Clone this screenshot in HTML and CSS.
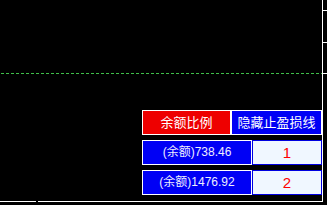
FILE: index.html
```html
<!DOCTYPE html>
<html lang="zh">
<head>
    <meta charset="UTF-8">
    <title>Chart</title>
    <link rel="stylesheet" href="styles.css">
</head>
<body>
    <div class="chart">
        <div class="plot">
            <div class="level-line"></div>

            <div class="panel">
                <div class="row">
                    <div class="btn btn-red btn-half">余额比例</div>
                    <div class="btn btn-blue btn-wide">隐藏止盈损线</div>
                </div>
                <div class="row">
                    <div class="btn btn-blue btn-label">(余额)738.46</div>
                    <div class="cell">1</div>
                </div>
                <div class="row">
                    <div class="btn btn-blue btn-label">(余额)1476.92</div>
                    <div class="cell">2</div>
                </div>
            </div>
        </div>

        <!-- price axis ticks -->
        <div class="tick" style="top: 10px"></div>
        <div class="tick" style="top: 42px"></div>
        <div class="tick" style="top: 73px"></div>
        <div class="axis-gap"></div>
    </div>
</body>
</html>
```

FILE: styles.css
```css
body {
    margin: 0;
    background-color: #000;
    font-family: "Liberation Sans", "Noto Sans CJK SC", sans-serif;
}

.chart {
    position: relative;
    width: 327px;
    height: 205px;
    overflow: hidden;
}

.plot {
    position: relative;
    width: 323px;
    height: 202px;
    border-right: 1px solid #fff;
    border-bottom: 1px solid #fff;
    display: flex;
    flex-direction: column;
    justify-content: flex-end;
    align-items: flex-end;
    padding-bottom: 6px;
    box-sizing: border-box;
}

.level-line {
    position: absolute;
    left: 1px;
    top: 73px;
    width: 321px;
    height: 1px;
    background: repeating-linear-gradient(to right, #3fbf4a 0, #3fbf4a 3px, transparent 3px, transparent 5px);
}

.panel {
    display: flex;
    flex-direction: column;
    gap: 5px;
    width: 180px;
}

.row {
    display: flex;
    height: 25px;
}

.btn {
    box-sizing: border-box;
    border: 1px solid #fff;
    color: #fff;
    text-align: center;
    line-height: 23px;
    white-space: nowrap;
}

.btn-red {
    background-color: #ee0000;
    font-size: 13px;
}

.btn-blue {
    background-color: #0000f5;
    font-size: 13px;
}

.btn-half {
    width: 89px;
}

.btn-wide {
    width: 91px;
}

.btn-label {
    width: 110px;
    font-size: 12px;
    color: #eef;
}

.cell {
    box-sizing: border-box;
    width: 70px;
    border: 1px solid #0000e0;
    background-color: #f0f7ff;
    color: #f00;
    font-size: 15px;
    line-height: 23px;
    text-align: center;
}

.tick {
    position: absolute;
    left: 323px;
    width: 4px;
    height: 1px;
    background-color: #fff;
}

.axis-gap {
    position: absolute;
    left: 36px;
    top: 201px;
    width: 2px;
    height: 1px;
    background-color: #000;
}
```
